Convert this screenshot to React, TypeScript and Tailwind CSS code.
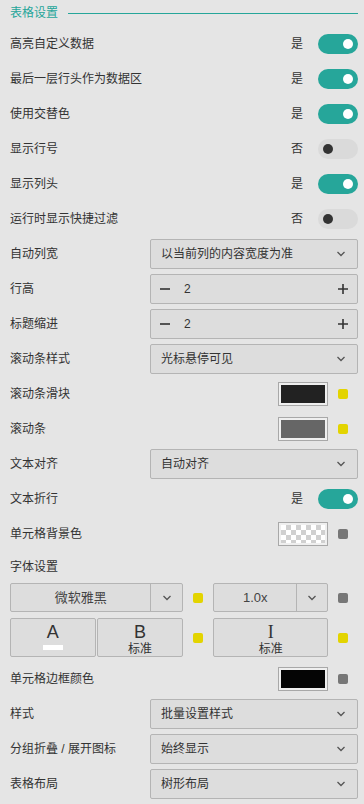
import React from 'react'

const Chevron = () => (
  <svg width="10" height="6" viewBox="0 0 10 6" className="shrink-0">
    <path d="M1.5 1 L5 4.5 L8.5 1" fill="none" stroke="#555" strokeWidth="1.3" />
  </svg>
)

function Toggle({ on }: { on: boolean }) {
  return (
    <div className="flex items-center">
      <span className="mr-[15px]">{on ? '是' : '否'}</span>
      <div
        className={
          on
            ? 'relative h-[20px] w-[40px] rounded-full bg-[#26a69a]'
            : 'relative h-[20px] w-[40px] rounded-full bg-[#dadada]'
        }
      >
        <span
          className={
            on
              ? 'absolute right-[5px] top-[5px] h-[10px] w-[10px] rounded-full bg-white'
              : 'absolute left-[5px] top-[5px] h-[10px] w-[10px] rounded-full bg-[#333333]'
          }
        />
      </div>
    </div>
  )
}

function Select({ value }: { value: string }) {
  return (
    <div className="flex h-[30px] w-[208px] items-center justify-between rounded-[2px] border border-[#b4b4b4] bg-[#dddddd] pl-[10px] pr-[11px]">
      <span>{value}</span>
      <Chevron />
    </div>
  )
}

function Stepper({ value }: { value: number }) {
  return (
    <div className="flex h-[30px] w-[208px] items-center rounded-[2px] border border-[#b4b4b4] bg-[#dddddd] pl-[9px] pr-[9px]">
      <svg width="10" height="10" viewBox="0 0 10 10">
        <path d="M0 5 H10" stroke="#333" strokeWidth="1.6" />
      </svg>
      <span className="ml-[14px] flex-1">{value}</span>
      <svg width="10" height="10" viewBox="0 0 10 10">
        <path d="M0 5 H10 M5 0 V10" stroke="#333" strokeWidth="1.6" />
      </svg>
    </div>
  )
}

function Swatch({ color, checker }: { color?: string; checker?: boolean }) {
  return (
    <div className="flex items-center">
      <div className="h-[24px] w-[50px] border border-[#a8a8a8] bg-[#efefef] p-[2px]">
        {checker ? (
          <div className="h-full w-full bg-[image:repeating-conic-gradient(#d0d0d0_0%_25%,#ffffff_0%_50%)] bg-[length:10px_10px]" />
        ) : (
          <div className="h-full w-full" style={{ background: color }} />
        )}
      </div>
      <Dot yellow={!checker && color !== '#050505'} />
    </div>
  )
}

function Dot({ yellow }: { yellow: boolean }) {
  return (
    <span
      className={
        yellow
          ? 'ml-[10px] mr-[10px] block h-[10px] w-[10px] rounded-[2px] bg-[#e3d400]'
          : 'ml-[10px] mr-[10px] block h-[10px] w-[10px] rounded-[2px] bg-[#777777]'
      }
    />
  )
}

function Row({ label, children }: { label: string; children?: React.ReactNode }) {
  return (
    <div className="flex h-[35px] items-center justify-between">
      <span>{label}</span>
      {children}
    </div>
  )
}

export default function App() {
  return (
    <div className="min-h-[804px] w-[364px] bg-[#e5e5e5] pl-[10px] pr-[6px] font-['Liberation_Sans','Noto_Sans_CJK_SC',sans-serif] text-[12px] text-[#333333]">
      {/* 标题 */}
      <div className="flex h-[26px] items-center">
        <span className="text-[#26a69a]">表格设置</span>
        <div className="ml-[10px] h-px flex-1 bg-[#26a69a]" />
      </div>

      <Row label="高亮自定义数据"><Toggle on /></Row>
      <Row label="最后一层行头作为数据区"><Toggle on /></Row>
      <Row label="使用交替色"><Toggle on /></Row>
      <Row label="显示行号"><Toggle on={false} /></Row>
      <Row label="显示列头"><Toggle on /></Row>
      <Row label="运行时显示快捷过滤"><Toggle on={false} /></Row>
      <Row label="自动列宽"><Select value="以当前列的内容宽度为准" /></Row>
      <Row label="行高"><Stepper value={2} /></Row>
      <Row label="标题缩进"><Stepper value={2} /></Row>
      <Row label="滚动条样式"><Select value="光标悬停可见" /></Row>
      <Row label="滚动条滑块"><Swatch color="#222222" /></Row>
      <Row label="滚动条"><Swatch color="#666666" /></Row>
      <Row label="文本对齐"><Select value="自动对齐" /></Row>
      <Row label="文本折行"><Toggle on /></Row>
      <Row label="单元格背景色"><Swatch checker /></Row>

      {/* 字体设置 */}
      <div className="flex h-[32px] items-center">字体设置</div>
      <div className="flex h-[29px] items-center">
        <div className="flex h-full w-[174px] rounded-[2px] border border-[#b4b4b4] bg-[#dddddd]">
          <div className="flex flex-1 items-center justify-center text-[13px] text-[#444]">微软雅黑</div>
          <div className="flex w-[32px] items-center justify-center border-l border-[#b4b4b4]">
            <Chevron />
          </div>
        </div>
        <Dot yellow />
        <div className="flex h-full w-[115px] rounded-[2px] border border-[#b4b4b4] bg-[#dddddd]">
          <div className="flex flex-1 items-center justify-center text-[13px] text-[#444]">1.0x</div>
          <div className="flex w-[31px] items-center justify-center border-l border-[#b4b4b4]">
            <Chevron />
          </div>
        </div>
        <Dot yellow={false} />
      </div>
      <div className="mb-[4px] mt-[6px] flex h-[39px] items-center">
        <div className="flex h-full w-[86px] flex-col items-center rounded-[2px] border border-[#b4b4b4] bg-[#dddddd] pt-[3px]">
          <span className="text-[18px] leading-[20px] text-[#333]">A</span>
          <span className="mt-[3px] block h-[5px] w-[20px] bg-white" />
        </div>
        <div className="ml-[1px] flex h-full w-[87px] flex-col items-center rounded-[2px] border border-[#b4b4b4] bg-[#dddddd] pt-[3px]">
          <span className="text-[18px] leading-[20px] text-[#333]">B</span>
          <span className="leading-[14px]">标准</span>
        </div>
        <Dot yellow />
        <div className="flex h-full w-[115px] flex-col items-center rounded-[2px] border border-[#b4b4b4] bg-[#dddddd] pt-[3px]">
          <span className="font-['Liberation_Serif',serif] text-[18px] leading-[20px] text-[#333]">I</span>
          <span className="leading-[14px]">标准</span>
        </div>
        <Dot yellow />
      </div>

      <Row label="单元格边框颜色"><Swatch color="#050505" /></Row>
      <Row label="样式"><Select value="批量设置样式" /></Row>
      <Row label="分组折叠 / 展开图标"><Select value="始终显示" /></Row>
      <Row label="表格布局"><Select value="树形布局" /></Row>
    </div>
  )
}
